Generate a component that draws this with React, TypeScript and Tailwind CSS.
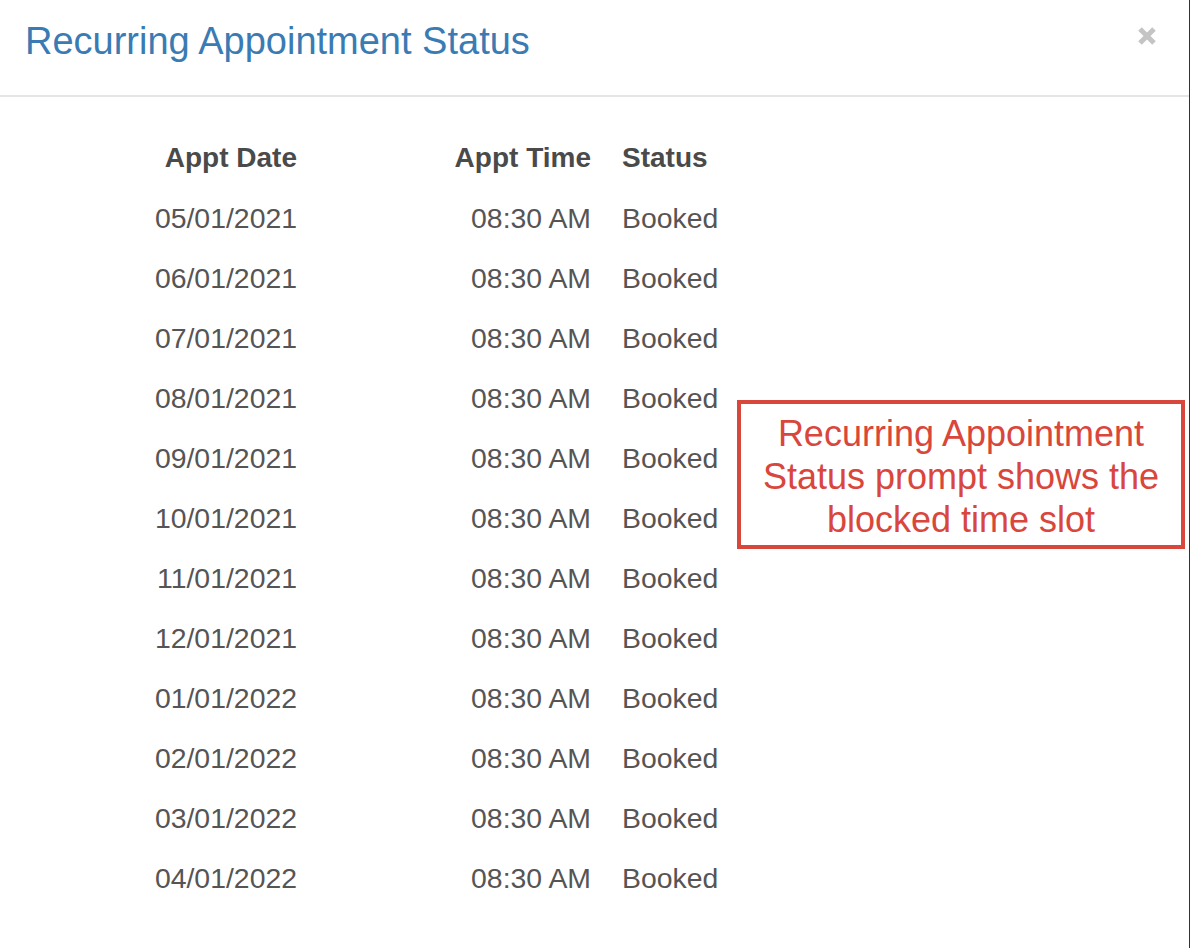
const ROWS = [
  "05/01/2021",
  "06/01/2021",
  "07/01/2021",
  "08/01/2021",
  "09/01/2021",
  "10/01/2021",
  "11/01/2021",
  "12/01/2021",
  "01/01/2022",
  "02/01/2022",
  "03/01/2022",
  "04/01/2022",
];

function CloseIcon() {
  return (
    <svg width="20" height="20" viewBox="0 0 20 20" className="text-[#c4c4c4]">
      <path d="M3 3L17 17M17 3L3 17" stroke="currentColor" strokeWidth="5" strokeLinecap="butt" />
    </svg>
  );
}

export default function App() {
  return (
    <div
      className="relative w-[1190px] h-[948px] bg-white border-r border-[#333] overflow-hidden"
      style={{ fontFamily: '"Liberation Sans", Arial, sans-serif' }}
    >
      <div className="flex items-center justify-between h-[97px] border-b-2 border-[#e5e5e5] pl-[25px] pr-[32px]">
        <h1 className="text-[38px] leading-none text-[#3b7bb3] -mt-[13px]">Recurring Appointment Status</h1>
        <button className="-mt-[24px]">
          <CloseIcon />
        </button>
      </div>

      <div className="pt-[31px]">
        <div className="flex h-[60px] items-center text-[28px] font-bold text-[#4a4a4a]">
          <div className="w-[297px] text-right">Appt Date</div>
          <div className="w-[294px] text-right">Appt Time</div>
          <div className="pl-[31px]">Status</div>
        </div>
        {ROWS.map((date) => (
          <div key={date} className="flex h-[60px] items-center text-[28.4px] text-[#555]">
            <div className="w-[297px] text-right">{date}</div>
            <div className="w-[294px] text-right">08:30 AM</div>
            <div className="pl-[31px]">Booked</div>
          </div>
        ))}
      </div>

      <div className="absolute left-[737px] top-[400px] w-[448px] h-[149px] border-4 border-[#d9463b] flex items-center justify-center">
        <p className="text-center text-[36px] leading-[43px] text-[#d9463b] mt-[4px]">
          Recurring Appointment
          <br />
          Status prompt shows the
          <br />
          blocked time slot
        </p>
      </div>
    </div>
  );
}
